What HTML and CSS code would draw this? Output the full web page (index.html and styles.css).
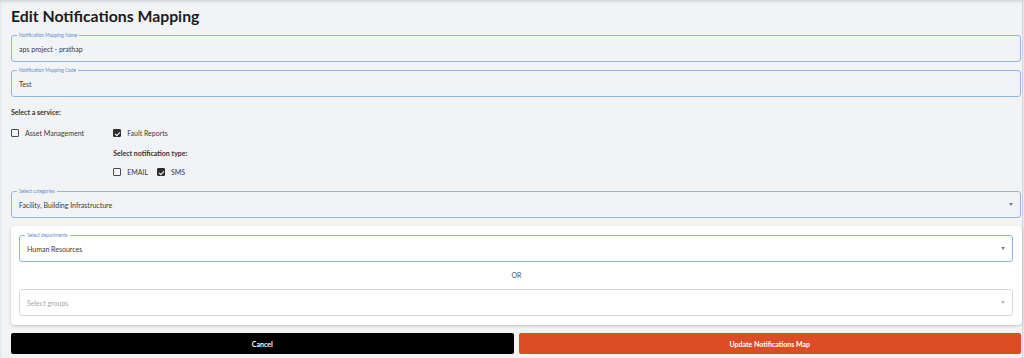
FILE: index.html
```html
<!DOCTYPE html>
<html lang="en">

<head>
    <meta charset="UTF-8">
    <meta name="viewport" content="width=device-width, initial-scale=1.0">
    <title>Edit Notifications Mapping</title>
    <link rel="stylesheet" href="styles.css">
</head>

<body>
    <div class="page">
        <h2>Edit Notifications Mapping</h2>

        <div class="field">
            <span class="field-label">Notification Mapping Name</span>
            <span class="field-value">aps project - prathap</span>
        </div>

        <div class="field">
            <span class="field-label">Notification Mapping Code</span>
            <span class="field-value">Test</span>
        </div>

        <div class="section-title">Select a service:</div>

        <div class="services">
            <label class="check">
                <span class="box"></span>
                Asset Management
            </label>

            <div class="service-col">
                <label class="check">
                    <span class="box checked"></span>
                    Fault Reports
                </label>
                <div class="section-title sub">Select notification type:</div>
                <div class="types">
                    <label class="check">
                        <span class="box"></span>
                        EMAIL
                    </label>
                    <label class="check">
                        <span class="box checked"></span>
                        SMS
                    </label>
                </div>
            </div>
        </div>

        <div class="field select">
            <span class="field-label">Select categories</span>
            <span class="field-value">Facility, Building Infrastructure</span>
            <span class="arrow"></span>
        </div>

        <div class="card">
            <div class="field select white">
                <span class="field-label">Select departments</span>
                <span class="field-value">Human Resources</span>
                <span class="arrow"></span>
            </div>
            <div class="or">OR</div>
            <div class="field select white plain">
                <span class="field-value placeholder">Select groups</span>
                <span class="arrow light"></span>
            </div>
        </div>

        <div class="actions">
            <button class="btn cancel">Cancel</button>
            <button class="btn update">Update Notifications Map</button>
        </div>
    </div>
</body>

</html>
```

FILE: styles.css
```css
* {
    margin: 0;
    padding: 0;
    box-sizing: border-box;
    font-family: "Lato", sans-serif;
}

body {
    background: #f2f3f5;
    color: #222;
    box-shadow: inset 0 2px 3px rgba(0, 0, 0, 0.12);
    min-height: 100vh;
    overflow: hidden;
}

.page {
    width: 1023px;
    min-height: 100vh;
    padding: 5px 2px 0 11px;
    border-right: 1px solid #d4d6da;
}

h2 {
    font-size: 15.8px;
    font-weight: 700;
    line-height: 22px;
    color: #1c1c1c;
    margin-bottom: 8px;
}

/* outlined inputs */
.field {
    position: relative;
    display: flex;
    align-items: center;
    height: 27px;
    padding: 0 7px;
    border: 1px solid #8db5e6;
    border-radius: 3px;
    background: #f2f3f5;
    margin-bottom: 8px;
    width: 1010px;
}

.field-label {
    position: absolute;
    top: -4px;
    left: 5px;
    padding: 0 2px;
    font-size: 4.8px;
    line-height: 7px;
    color: #5f8fd0;
    background: inherit;
}

.field-value {
    font-size: 7px;
    color: #3a3a3a;
}

.placeholder {
    color: #a8a8a8;
}

.arrow {
    margin-left: auto;
    width: 0;
    height: 0;
    border-left: 2.5px solid transparent;
    border-right: 2.5px solid transparent;
    border-top: 3px solid #808080;
}

.arrow.light {
    border-top-color: #bbb;
}

/* services */
.section-title {
    font-size: 7px;
    font-weight: 700;
    color: #333;
    margin-top: 9px;
    line-height: 12px;
}

.section-title.sub {
    margin: 8px 0 0;
}

.services {
    display: flex;
    align-items: flex-start;
    gap: 29px;
    margin-top: 9px;
    margin-bottom: 13px;
}

.service-col {
    display: flex;
    flex-direction: column;
}

.types {
    display: flex;
    gap: 9px;
    margin-top: 7px;
}

.check {
    display: flex;
    align-items: center;
    gap: 6px;
    font-size: 7px;
    color: #3a3a3a;
    line-height: 12px;
}

.box {
    width: 8px;
    height: 8px;
    border: 1px solid #4a4a4a;
    border-radius: 1px;
    position: relative;
}

.box.checked {
    background: #2e2e2e;
    border-color: #2e2e2e;
}

.box.checked::after {
    content: '';
    position: absolute;
    left: 2px;
    top: 0.5px;
    width: 2px;
    height: 4px;
    border: solid #fff;
    border-width: 0 1px 1px 0;
    transform: rotate(45deg);
}

/* departments card */
.card {
    width: 1011px;
    background: #fff;
    border-radius: 4px;
    box-shadow: 0 1px 3px rgba(0, 0, 0, 0.2);
    padding: 9px 8px;
}

.field.white {
    background: #fff;
    width: 994px;
    margin-bottom: 0;
}

.field.plain {
    border-color: #d8d8d8;
}

.or {
    text-align: center;
    font-size: 7px;
    color: #555;
    line-height: 27px;
}

.actions {
    display: flex;
    gap: 5px;
    width: 1010px;
    margin-top: 8px;
}

.btn {
    flex: 1;
    height: 21px;
    border: none;
    border-radius: 2px;
    color: #fff;
    font-size: 7px;
    font-weight: 700;
    cursor: pointer;
}

.cancel {
    background: #000;
}

.update {
    background: #dc4d27;
}
```
